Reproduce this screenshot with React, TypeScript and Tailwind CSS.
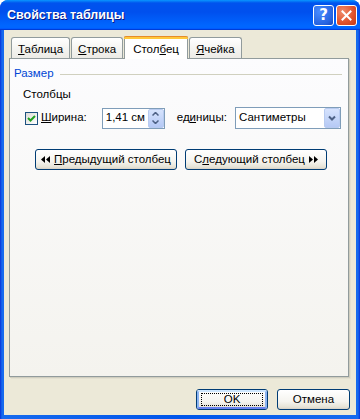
import React from "react";

function XpButton({ children, className = "", isDefault = false }: { children: React.ReactNode; className?: string; isDefault?: boolean }) {
  return (
    <div
      className={`h-[21px] rounded-[3px] border border-[#003C74] bg-[linear-gradient(to_bottom,#FFFFFF_0%,#F5F4EF_60%,#E6E3D6_90%,#D6D0C5_100%)] flex items-center justify-center text-black ${className}`}
    >
      {isDefault ? (
        <div className="w-full h-full rounded-[2px] border-[2px] border-[#8CB4F2] border-t-[#CEE7FF] border-b-[#6982EE] flex items-center justify-center">
          <div className="border border-dotted border-black px-[22px] leading-[11px] h-[13px] flex items-center">{children}</div>
        </div>
      ) : (
        children
      )}
    </div>
  );
}

function Tab({ label, u, rest, selected = false }: { label?: string; u: string; rest: string; selected?: boolean }) {
  if (selected) {
    return (
      <div className="relative -mb-[1px] z-10 h-[23px] px-[8px] bg-white border-x border-[#919B9C] flex items-start pt-[5px] rounded-t-[2px]">
        <div className="absolute left-[-1px] right-[-1px] top-0 h-[3px] rounded-t-[2px] bg-[#FFC83C] border-t border-[#E68B2C]"></div>
        <span>
          {label}
          <span className="underline">{u}</span>
          {rest}
        </span>
      </div>
    );
  }
  return (
    <div className="h-[21px] px-[6px] border border-b-0 border-[#919B9C] rounded-t-[3px] bg-[linear-gradient(to_bottom,#FFFFFF,#F3F3EF_60%,#ECEBE6)] flex items-start pt-[3px]">
      <span>
        {label}
        <span className="underline">{u}</span>
        {rest}
      </span>
    </div>
  );
}

function DoubleLeft() {
  return (
    <svg width="9" height="7" viewBox="0 0 9 7" className="mr-[4px]">
      <polygon points="0,3.5 4,0 4,7" fill="black" />
      <polygon points="5,3.5 9,0 9,7" fill="black" />
    </svg>
  );
}
function DoubleRight() {
  return (
    <svg width="9" height="7" viewBox="0 0 9 7" className="ml-[4px]">
      <polygon points="0,0 4,3.5 0,7" fill="black" />
      <polygon points="5,0 9,3.5 5,7" fill="black" />
    </svg>
  );
}

export default function App() {
  return (
    <div className="w-[360px] h-[419px] flex flex-col rounded-t-[8px] overflow-hidden bg-[linear-gradient(to_right,#0831D9,#166AEE_2px,#0055EA_50%,#166AEE_calc(100%-2px),#0831D9)] font-['Liberation_Sans',Tahoma,sans-serif] text-[11.5px] text-black">
      {/* Title bar */}
      <div className="h-[30px] shrink-0 flex items-center pl-[7px] pr-[3px] bg-[linear-gradient(to_bottom,#0997FF_0%,#0053EE_10%,#0050EE_40%,#0066FF_85%,#0066FF_92%,#005BFF_95%,#003DD7_97%,#003DD7_100%)]">
        <span className="text-white font-bold text-[12.5px] [text-shadow:1px_1px_0_#0A1883]">Свойства таблицы</span>
        <div className="ml-auto flex gap-[2px] pt-[1px]">
          <div className="w-[21px] h-[21px] rounded-[3px] border border-white bg-[radial-gradient(circle_at_30%_30%,#4A8CFF,#2663E0_70%,#1946B8)] flex items-center justify-center">
            <span className="text-white font-bold text-[15px] leading-none font-['DejaVu_Sans',sans-serif]">?</span>
          </div>
          <div className="w-[21px] h-[21px] rounded-[3px] border border-white bg-[radial-gradient(circle_at_30%_30%,#F08C6C,#E0502A_60%,#C23A1A)] flex items-center justify-center">
            <svg width="11" height="11" viewBox="0 0 11 11">
              <path d="M1.5 1.5 L9.5 9.5 M9.5 1.5 L1.5 9.5" stroke="white" strokeWidth="2" strokeLinecap="square" />
            </svg>
          </div>
        </div>
      </div>

      {/* Body */}
      <div className="flex-1 mx-[4px] mb-[4px] bg-[#ECE9D8] flex flex-col">
        <div className="pl-[5px] pr-[7px] pt-[6px] flex flex-col">
          {/* Tabs */}
          <div className="flex items-end pl-[2px] gap-[1px] relative">
            <Tab u="Т" rest="аблица" />
            <Tab u="С" rest="трока" />
            <Tab label="Стол" u="б" rest="ец" selected />
            <Tab u="Я" rest="чейка" />
          </div>
          {/* Panel */}
          <div className="h-[319px] border border-[#919B9C] shadow-[1px_1px_0_#D0CEBF,2px_2px_0_#E3E0D0] bg-[linear-gradient(to_bottom,#FCFCFE,#F4F3EE)] flex flex-col">
            {/* Group label */}
            <div className="flex items-center pl-[4px] pr-[6px] pt-[8px] h-[22px]">
              <span className="text-[#0046D5]">Размер</span>
              <div className="flex-1 ml-[6px] h-[1px] bg-[#D0D0BF]"></div>
            </div>
            <div className="pl-[13px] pt-[5px] h-[18px]">Столбцы</div>
            {/* Row */}
            <div className="flex items-center pl-[15px] mt-[8px] h-[22px]">
              <div className="w-[13px] h-[13px] border border-[#1C5180] bg-[linear-gradient(135deg,#DCDCD7,#FFFFFF)] flex items-center justify-center">
                <svg width="9" height="9" viewBox="0 0 9 9">
                  <path d="M1 4 L3.5 6.5 L8 2" stroke="#21A121" strokeWidth="2" fill="none" />
                </svg>
              </div>
              <span className="ml-[3px]">
                <span className="underline">Ш</span>ирина:
              </span>
              <div className="ml-[15px] w-[63px] h-[21px] border border-[#7F9DB9] bg-white flex items-center">
                <span className="pl-[3px] flex-1">1,41 см</span>
                <div className="w-[16px] h-[19px] mr-[0px] rounded-[2px] border border-[#B8CBF0] bg-[linear-gradient(to_bottom,#D6E3FD,#B5C9F5)] flex flex-col items-center justify-center gap-[4px]">
                  <svg width="7" height="4" viewBox="0 0 7 4"><path d="M0.5 3.5 L3.5 0.5 L6.5 3.5" stroke="#4D6185" strokeWidth="1.5" fill="none" /></svg>
                  <svg width="7" height="4" viewBox="0 0 7 4"><path d="M0.5 0.5 L3.5 3.5 L6.5 0.5" stroke="#4D6185" strokeWidth="1.5" fill="none" /></svg>
                </div>
              </div>
              <span className="ml-[12px]">
                ед<span className="underline">и</span>ницы:
              </span>
              <div className="ml-auto mr-[7px] w-[106px] h-[22px] border border-[#7F9DB9] bg-white flex items-center">
                <span className="pl-[3px] flex-1">Сантиметры</span>
                <div className="w-[16px] h-[20px] rounded-[2px] border border-[#B8CBF0] bg-[linear-gradient(to_bottom,#D6E3FD,#B5C9F5)] flex items-center justify-center">
                  <svg width="8" height="6" viewBox="0 0 8 6"><path d="M1 1.5 L4 4.5 L7 1.5" stroke="#4D6185" strokeWidth="2" fill="none" /></svg>
                </div>
              </div>
            </div>
            {/* Nav buttons */}
            <div className="flex pl-[25px] mt-[20px] gap-[8px]">
              <XpButton className="w-[142px]">
                <DoubleLeft />
                <span><span className="underline">П</span>редыдущий столбец</span>
              </XpButton>
              <XpButton className="w-[142px]">
                <span>С<span className="underline">л</span>едующий столбец</span>
                <DoubleRight />
              </XpButton>
            </div>
          </div>
        </div>
        {/* Footer */}
        <div className="flex justify-end pr-[6px] mt-[12px] gap-[9px]">
          <XpButton className="w-[72px]" isDefault>OK</XpButton>
          <XpButton className="w-[73px]">Отмена</XpButton>
        </div>
      </div>
    </div>
  );
}
